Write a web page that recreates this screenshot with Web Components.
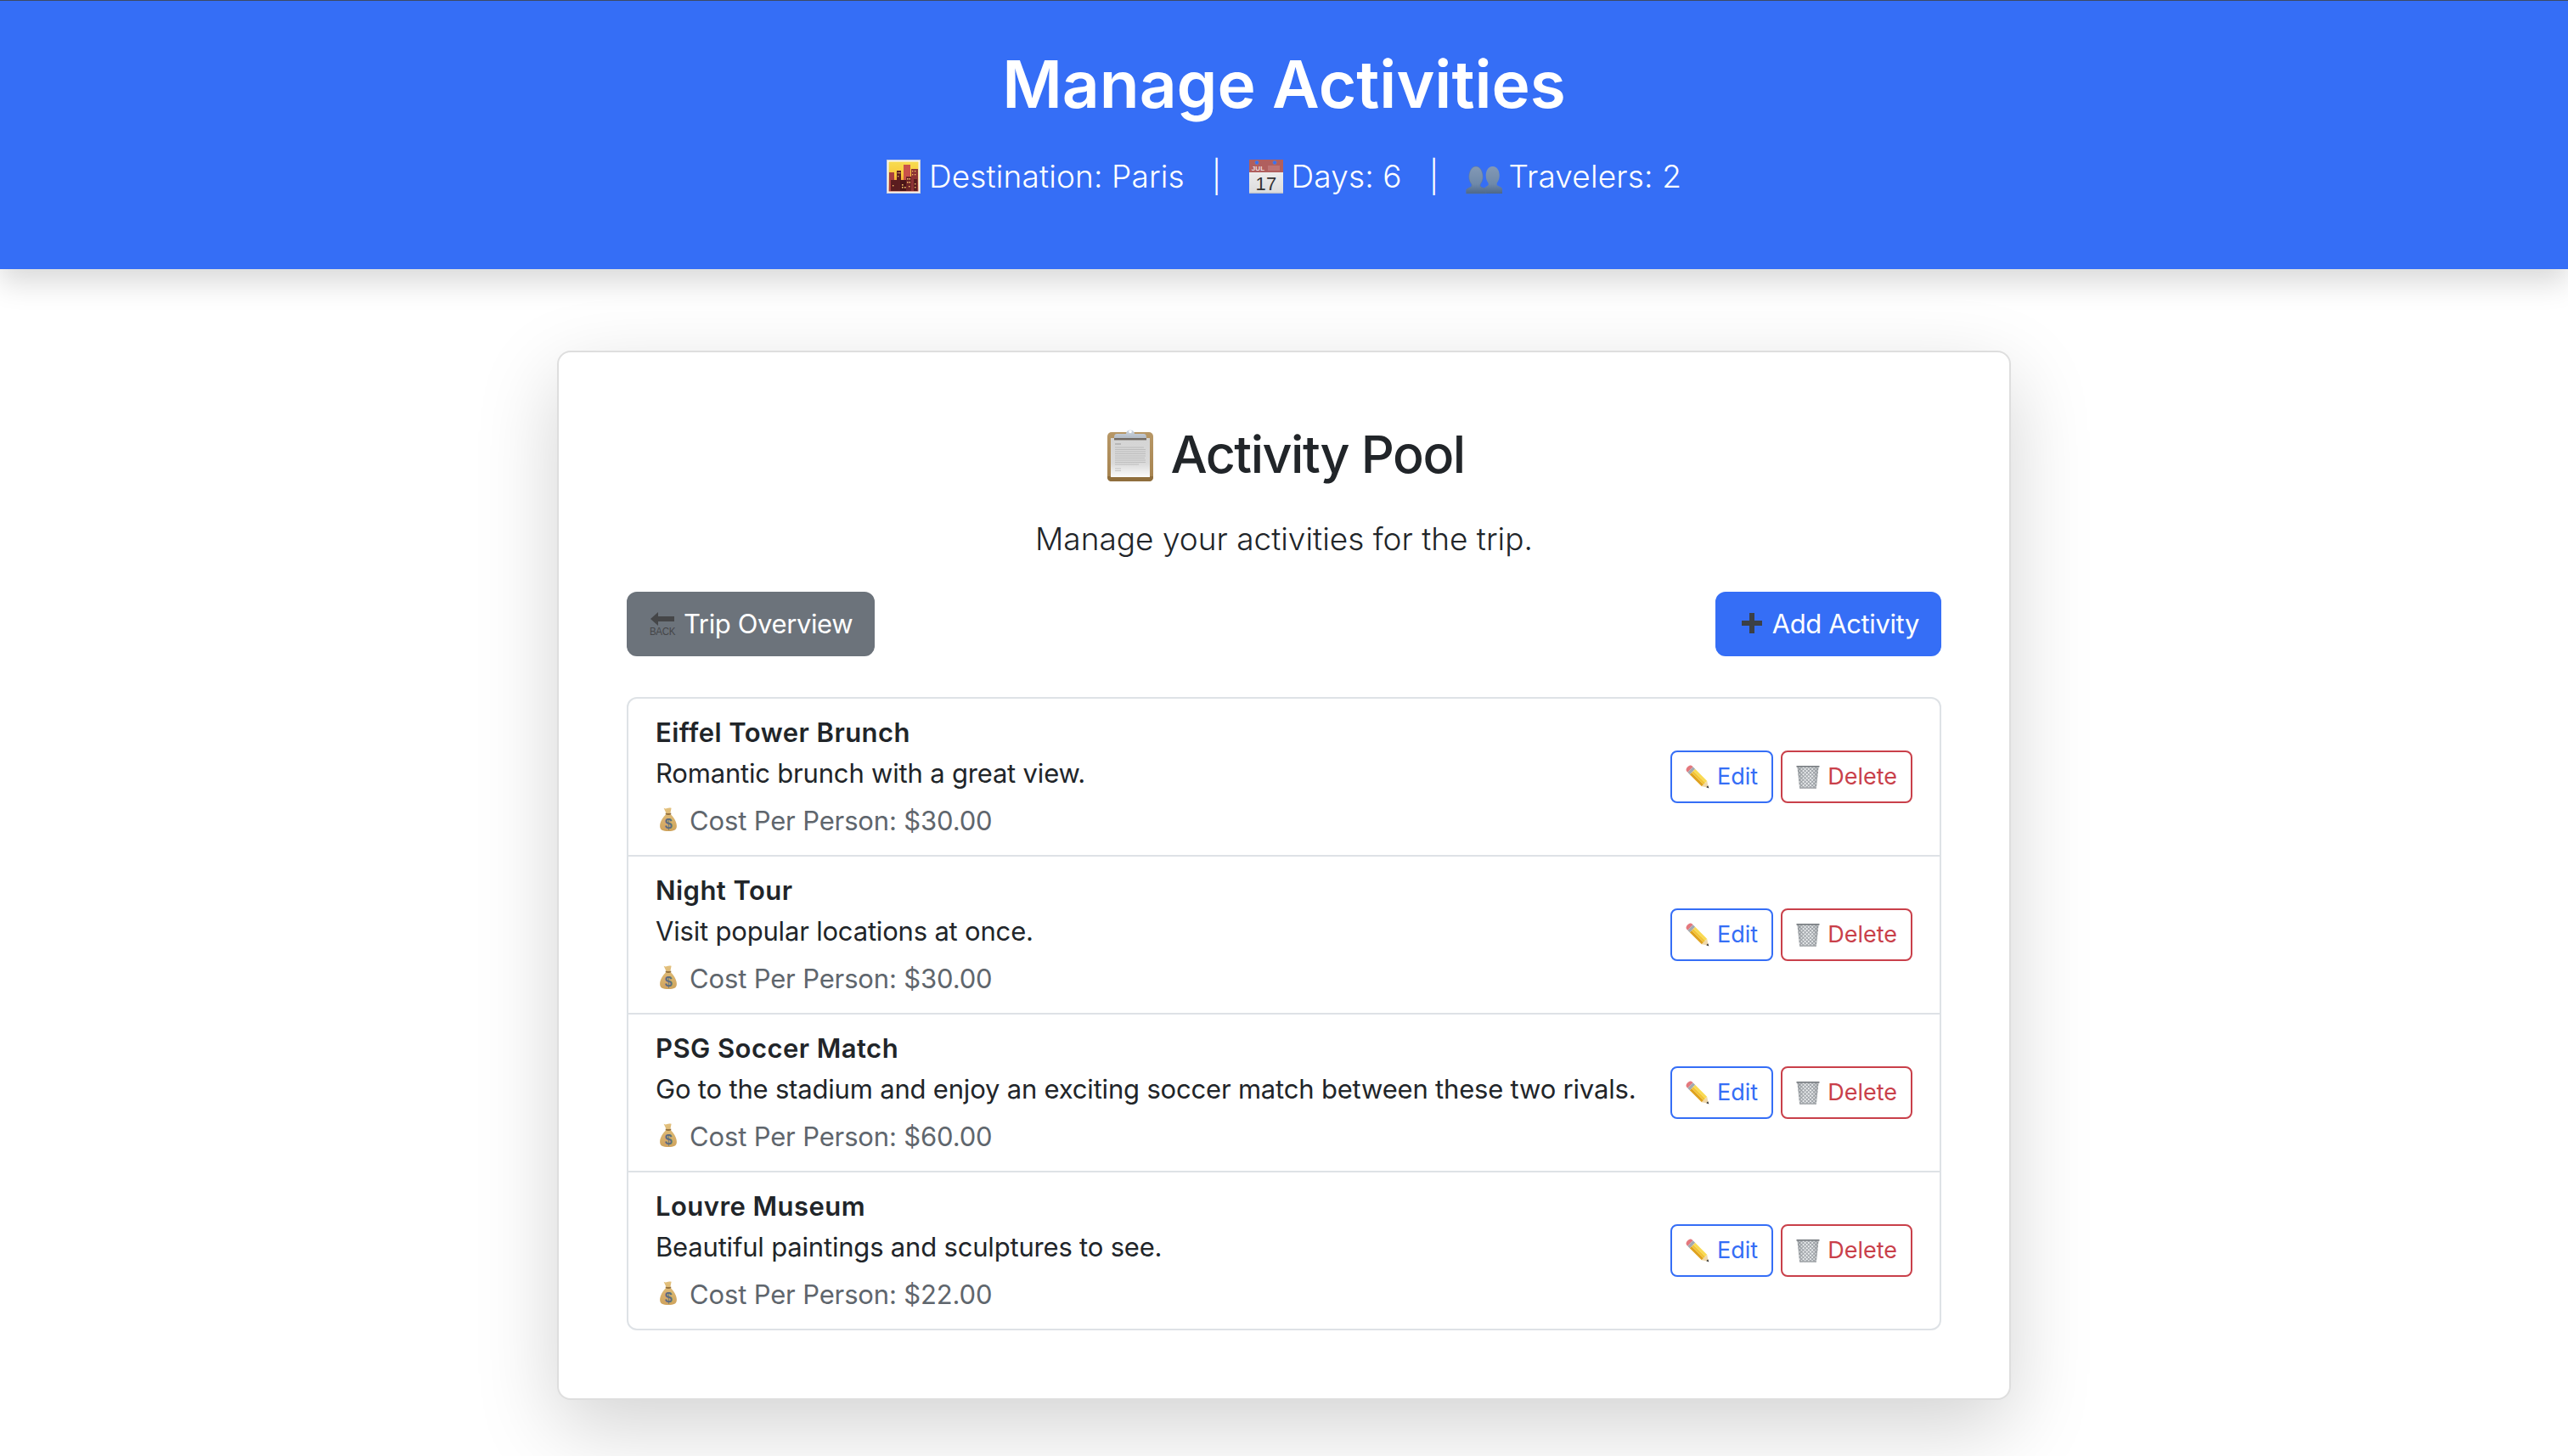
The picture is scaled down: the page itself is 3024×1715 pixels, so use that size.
<!DOCTYPE html>
<html lang="en">
<head>
<meta charset="utf-8">
<title>Manage Activities</title>
<style>
  html, body { margin: 0; padding: 0; background: #fff; }
  body { font-family: "Inter", "Liberation Sans", sans-serif; color: #212529; font-size: 31px; line-height: 1.5; height: 1715px; overflow: hidden; }
</style>
</head>
<body>
<trip-header>
  <span slot="title">Manage Activities</span>
  <trip-fact icon="city">Destination: Paris</trip-fact>
  <trip-fact icon="calendar">Days: 6</trip-fact>
  <trip-fact icon="people">Travelers: 2</trip-fact>
</trip-header>

<pool-card>
  <span slot="title">Activity Pool</span>
  <span slot="lead">Manage your activities for the trip.</span>
  <action-button slot="left" variant="secondary" icon="back">Trip Overview</action-button>
  <action-button slot="right" variant="primary" icon="plus">Add Activity</action-button>
  <activity-list>
    <activity-item>
      <span slot="name">Eiffel Tower Brunch</span>
      <span slot="desc">Romantic brunch with a great view.</span>
      <span slot="cost">Cost Per Person: $30.00</span>
    </activity-item>
    <activity-item>
      <span slot="name">Night Tour</span>
      <span slot="desc">Visit popular locations at once.</span>
      <span slot="cost">Cost Per Person: $30.00</span>
    </activity-item>
    <activity-item>
      <span slot="name">PSG Soccer Match</span>
      <span slot="desc">Go to the stadium and enjoy an exciting soccer match between these two rivals.</span>
      <span slot="cost">Cost Per Person: $60.00</span>
    </activity-item>
    <activity-item>
      <span slot="name">Louvre Museum</span>
      <span slot="desc">Beautiful paintings and sculptures to see.</span>
      <span slot="cost">Cost Per Person: $22.00</span>
    </activity-item>
  </activity-list>
</pool-card>

<script>
const ICONS = {
  city: `<svg viewBox="0 0 40 40"><defs><linearGradient id="s" x1="0" y1="0" x2="0" y2="1"><stop offset="0" stop-color="#f7dc52"/><stop offset=".45" stop-color="#f9c93a"/><stop offset=".8" stop-color="#ec8a3a"/><stop offset="1" stop-color="#c9502f"/></linearGradient></defs>
    <rect x=".5" y=".5" width="39" height="39" fill="#f6f6f4" stroke="#c9ccd6"/>
    <rect x="2.500" y="2.500" width="35" height="35" fill="url(#s)"/>
    <rect x="3" y="15" width="6" height="22" fill="#a8403f"/><rect x="12" y="13" width="5" height="24" fill="#5b1d20"/>
    <rect x="20" y="6" width="8" height="31" fill="#c9524a"/><rect x="29" y="11" width="8" height="26" fill="#8d3334"/>
    <rect x="5" y="24" width="8" height="13" fill="#5a1c1f"/><rect x="16" y="24" width="8" height="13" fill="#4a1518"/><rect x="23" y="20" width="6" height="17" fill="#6c2326"/><rect x="32" y="23" width="4" height="14" fill="#5a1c1f"/>
    <g fill="#f6c16a"><rect x="13" y="15" width="1.300" height="1.300"/><rect x="15" y="15" width="1.300" height="1.300"/><rect x="13" y="19" width="1.300" height="1.300"/><rect x="30" y="13" width="1.300" height="1.300"/><rect x="33" y="13" width="1.300" height="1.300"/><rect x="30" y="17" width="1.300" height="1.300"/><rect x="33" y="17" width="1.300" height="1.300"/><rect x="24" y="22" width="1.500" height="1.500"/><rect x="26.500" y="22" width="1.500" height="1.500"/><rect x="24" y="26" width="1.500" height="1.500"/><rect x="26.500" y="26" width="1.500" height="1.500"/><rect x="18" y="32" width="1.600" height="1.600"/><rect x="21" y="32" width="1.600" height="1.600"/><rect x="18" y="29" width="1.600" height="1.600"/><rect x="7" y="30" width="1.400" height="1.400"/><rect x="33" y="28" width="1.400" height="1.400"/><rect x="33" y="32" width="1.400" height="1.400"/><rect x="26" y="31" width="1.400" height="1.400"/></g></svg>`,
  calendar: `<svg viewBox="0 0 40 40"><defs><linearGradient id="c" x1="0" y1="0" x2="0" y2="1"><stop offset="0" stop-color="#ececec"/><stop offset="1" stop-color="#dcdcdc"/></linearGradient></defs>
    <rect y="0" width="40" height="15" fill="#b05f5e"/><rect y="15" width="40" height="25" fill="url(#c)"/><rect y="38.800" width="40" height="1.200" fill="#b6bccb"/>
    <circle cx="9" cy="3.500" r="2.200" fill="#356ef6" stroke="#7d86a8" stroke-width=".5"/><circle cx="30" cy="3.500" r="2.200" fill="#356ef6" stroke="#7d86a8" stroke-width=".5"/>
    <text x="10.500" y="13" text-anchor="middle" font-family="Liberation Sans, sans-serif" font-size="8" font-weight="700" fill="#ecdcdc">JUL</text>
    <g stroke="#c98a8a" stroke-width="1"><path d="M23 7v6M25 7v6M27 7v6M29 7v6M31 7v6M33 7v6M35 7v6"/></g>
    <text x="20" y="35.500" text-anchor="middle" font-family="Liberation Sans, sans-serif" font-size="22" fill="#333">17</text></svg>`,
  people: `<svg viewBox="0 0 40 40"><defs><linearGradient id="p" x1="0" y1="0" x2="0" y2="1"><stop offset="0" stop-color="#8399b5"/><stop offset=".65" stop-color="#6f89a9"/><stop offset="1" stop-color="#4d6789"/></linearGradient></defs>
    <path fill="url(#p)" d="M20 40V35c2-2 4-3.500 6-4.500 1-.6 1-2.200.2-3.600-1.600-2-2.500-5-2.500-8.200 0-5 2.500-10.700 8-10.700s8 5.700 8 10.700c0 3.200-1 6.200-2.600 8.200-.8 1.400-.7 3 .3 3.600 2.500 1.300 5.100 2 5.600 4V40z"/>
    <path fill="url(#p)" stroke="#5a7598" stroke-width=".5" d="M.5 40v-4c.5-2 3.100-2.700 5.600-4 1-.6 1.100-2.200.3-3.600-1.600-2-2.600-5-2.600-8.200 0-5 2.500-12.200 8.200-12.200s8.200 7.200 8.200 12.200c0 3.200-1 6.200-2.600 8.200-.8 1.400-.7 3 .3 3.600 2.500 1.300 5.500 2 6 4.500V40z"/></svg>`,
  clipboard: `<svg viewBox="0 0 64 64"><defs><linearGradient id="b" x1="0" y1="0" x2="0" y2="1"><stop offset="0" stop-color="#b79766"/><stop offset="1" stop-color="#a5824e"/></linearGradient><linearGradient id="pa" x1="0" y1="0" x2="0" y2="1"><stop offset="0" stop-color="#d4d4d4"/><stop offset=".65" stop-color="#dadada"/><stop offset="1" stop-color="#fbfbfb"/></linearGradient><linearGradient id="cl" x1="0" y1="0" x2="0" y2="1"><stop offset="0" stop-color="#ccd6e2"/><stop offset="1" stop-color="#b4bbc4"/></linearGradient></defs>
    <rect x="5" y="5" width="54" height="58" rx="5" fill="url(#b)"/>
    <path d="M5 57h54v1c0 3-2 5-5 5H10c-3 0-5-2-5-5z" fill="#8f6e3d"/>
    <rect x="9" y="12" width="46" height="46" fill="url(#pa)"/>
    <g stroke="#a8a8a8" stroke-width=".8" opacity=".7"><path d="M14 23h34M14 25.500h36M14 28h36M14 30.500h36M14 33h36M14 35.500h35M14 38h36M14 40.500h36M14 43h28M14 48h7M14 50.500h7"/></g>
    <path d="M14 19h7" stroke="#999" stroke-width="1"/>
    <path d="M13 12c0-4 1-5 4-5h10c.4-6 9.600-6 10 0h10c3 0 4 1 4 5z" fill="url(#cl)"/><circle cx="32" cy="4.500" r="1.800" fill="#fff"/>
    <rect x="13" y="12" width="38" height="2.400" fill="#716a63"/></svg>`,
  back: `<svg viewBox="0 0 32 32"><path fill="#454648" d="M2 10 11 2v5h19v6H11v5z"/><text x="16" y="29" text-anchor="middle" textLength="30" lengthAdjust="spacingAndGlyphs" font-family="Liberation Sans, sans-serif" font-size="12.500" fill="#454648">BACK</text></svg>`,
  plus: `<svg viewBox="0 0 32 32"><path fill="#3c4046" d="M14 3h6v9h9v6h-9v9h-6v-9H5v-6h9z"/></svg>`,
  pencil: `<svg viewBox="0 0 28 28"><g transform="translate(3 3) rotate(45)">
    <rect x="7" y="-4.500" width="20" height="3" fill="#f9da52"/><rect x="7" y="-1.500" width="20" height="3" fill="#f3c433"/><rect x="7" y="1.500" width="20" height="3" fill="#dfa21e"/>
    <path d="M27-4.500 33.500 0 27 4.500z" fill="#efd8aa"/><path d="M31.500-1.400 34.500 0 31.500 1.400z" fill="#333"/>
    <path d="M3.500-4.500H2C.5-4.500-1-3-1 0s1.500 4.500 3 4.500h1.500z" fill="#e4787d"/><rect x="3.500" y="-4.500" width="3.500" height="9" fill="#a3a9b0"/></g></svg>`,
  trash: `<svg viewBox="0 0 28 28"><defs><pattern id="m" width="3" height="3" patternUnits="userSpaceOnUse" patternTransform="rotate(45)"><rect width="3" height="3" fill="#eef0f1"/><path d="M0 0h3v1H0zM0 0h1v3H0z" fill="#9ea3a8"/></pattern><linearGradient id="t" x1="0" y1="0" x2="1" y2="0"><stop offset="0" stop-color="#6f7479" stop-opacity=".45"/><stop offset=".3" stop-color="#6f7479" stop-opacity="0"/><stop offset=".7" stop-color="#6f7479" stop-opacity="0"/><stop offset="1" stop-color="#6f7479" stop-opacity=".45"/></linearGradient></defs>
    <path d="M1.500 2.500h25L24 26.500c0 .8-.8 1.300-2 1.300H6c-1.200 0-2-.5-2-1.300z" fill="url(#m)"/>
    <path d="M1.500 2.500h25L24 26.500c0 .8-.8 1.300-2 1.300H6c-1.200 0-2-.5-2-1.300z" fill="url(#t)"/>
    <path d="M.5 1h27v1.600H.5z" fill="#6f7479"/><path d="M4 26.300h20v1.400H4z" fill="#a3a6aa"/></svg>`,
  bag: `<svg viewBox="0 0 28 28"><defs><linearGradient id="g" x1="0" y1="0" x2="0" y2="1"><stop offset="0" stop-color="#e3c17e"/><stop offset="1" stop-color="#cfa35c"/></linearGradient></defs>
    <g transform="translate(2.400 0) scale(.9 1)"><path d="M8 .8c2 .9 3 .8 4.500.3 1.500-.6 3-.9 5.500-.3L16.500 7.500c4 3.500 8.500 9 8.500 14.500 0 4.500-3.500 6-11 6s-11-1.500-11-6C3 16.500 7.500 11 11.500 7.500z" fill="url(#g)"/>
    <path d="M10.500 6.500c2 .8 5 .8 7 0l.2 1.800c-2.200.8-5.200.8-7.400 0z" fill="#94713e"/></g>
    <text x="15" y="24.500" text-anchor="middle" font-family="Liberation Sans, sans-serif" font-size="16" font-weight="700" fill="#5b6c80">$</text></svg>`
};

class TripEmoji extends HTMLElement {
  static get observedAttributes() { return ['name']; }
  constructor() { super(); this.attachShadow({ mode: 'open' }); this.render(); }
  attributeChangedCallback() { this.render(); }
  render() {
    this.shadowRoot.innerHTML = `<style>:host{display:inline-block;flex:none;width:var(--size,1em);height:var(--size,1em);line-height:0}svg{display:block;width:100%;height:100%;overflow:visible}</style>${ICONS[this.getAttribute('name')] || ''}`;
  }
}
customElements.define('trip-emoji', TripEmoji);

const headerTpl = document.createElement('template');
headerTpl.innerHTML = `<style>
  :host{display:block;background:#356ef6;color:#fff;border-top:1px solid #3d4a63;box-shadow:0 16px 32px rgba(0,0,0,.15);text-align:center;padding:50px 0 80px;position:relative}
  h1{margin:0 0 32px;font-size:76.6px;line-height:96px;font-weight:600}
  .facts{display:flex;justify-content:center;align-items:center;height:58px}
</style><h1><slot name="title"></slot></h1><div class="facts"><slot></slot></div>`;
class TripHeader extends HTMLElement {
  constructor(){ super(); this.attachShadow({mode:'open'}).append(headerTpl.content.cloneNode(true)); }
}
customElements.define('trip-header', TripHeader);

const factTpl = document.createElement('template');
factTpl.innerHTML = `<style>
  :host{display:inline-flex;align-items:center;font-size:37px;letter-spacing:.15px;line-height:58px;font-weight:300;--size:40px;white-space:pre}
  :host(:not(:first-of-type))::before{content:"|";margin:0 32px}
  .t{margin-left:10px}
</style><trip-emoji></trip-emoji><span class="t"><slot></slot></span>`;
class TripFact extends HTMLElement {
  constructor(){ super(); this.attachShadow({mode:'open'}).append(factTpl.content.cloneNode(true)); }
  connectedCallback(){ this.shadowRoot.querySelector('trip-emoji').setAttribute('name', this.getAttribute('icon')); }
}
customElements.define('trip-fact', TripFact);

const cardTpl = document.createElement('template');
cardTpl.innerHTML = `<style>
  :host{display:block;box-sizing:border-box;width:1712px;margin:96px auto 0;background:#fff;border:2px solid rgba(0,0,0,.13);border-radius:16px;box-shadow:0 32px 96px rgba(0,0,0,.175);padding:80px}
  h2{margin:2px 0 32px;display:flex;justify-content:center;align-items:center;gap:15px;font-size:61px;letter-spacing:-1.5px;line-height:77px;font-weight:500;--size:64px}
  p{margin:0 0 33px;text-align:center;font-size:37px;line-height:58px;font-weight:300}
  .bar{display:flex;justify-content:space-between;margin-bottom:48px}
</style>
<h2><trip-emoji name="clipboard"></trip-emoji><slot name="title"></slot></h2>
<p><slot name="lead"></slot></p>
<div class="bar"><slot name="left"></slot><slot name="right"></slot></div>
<slot></slot>`;
class PoolCard extends HTMLElement {
  constructor(){ super(); this.attachShadow({mode:'open'}).append(cardTpl.content.cloneNode(true)); }
}
customElements.define('pool-card', PoolCard);

const btnTpl = document.createElement('template');
btnTpl.innerHTML = `<style>
  :host{display:inline-flex;align-items:center;box-sizing:border-box;border:2px solid transparent;border-radius:12px;font-size:31px;letter-spacing:-.38px;line-height:48px;padding:12px 24px;gap:9px;--size:32px;white-space:nowrap;font-weight:400}
  :host([variant=primary]){background:#356ef6;border-color:#356ef6;color:#fff}
  :host([variant=secondary]){background:#6c737b;border-color:#6c737b;color:#fff}
  :host([size=sm]){font-size:27px;letter-spacing:0;line-height:42px;padding:8px 16px;border-radius:8px;--size:28px}
  :host([variant=outline-primary]){background:#fff;border-color:#356ef6;color:#356ef6}
  :host([variant=outline-danger]){background:#fff;border-color:#c9404a;color:#c9404a}
</style><trip-emoji></trip-emoji><span><slot></slot></span>`;
class ActionButton extends HTMLElement {
  constructor(){ super(); this.attachShadow({mode:'open'}).append(btnTpl.content.cloneNode(true)); }
  connectedCallback(){ this.shadowRoot.querySelector('trip-emoji').setAttribute('name', this.getAttribute('icon')); }
}
customElements.define('action-button', ActionButton);

const listTpl = document.createElement('template');
listTpl.innerHTML = `<style>
  :host{display:block;border:2px solid #dee2e6;border-radius:12px;overflow:hidden}
  ::slotted(activity-item:not(:last-child)){border-bottom:2px solid #dee2e6}
</style><slot></slot>`;
class ActivityList extends HTMLElement {
  constructor(){ super(); this.attachShadow({mode:'open'}).append(listTpl.content.cloneNode(true)); }
}
customElements.define('activity-list', ActivityList);

const itemTpl = document.createElement('template');
itemTpl.innerHTML = `<style>
  :host{display:flex;justify-content:space-between;align-items:center;box-sizing:border-box;height:186px;padding:16px 32px}
  :host(:last-child){height:184px}
  .name{font-weight:600;line-height:48px;font-size:31px;letter-spacing:.45px}
  .desc{line-height:48px;font-size:31px;letter-spacing:-.19px}
  .cost{display:flex;align-items:center;margin-top:8px;line-height:48px;color:#5f666d;font-size:31px;letter-spacing:-.15px;--size:28px;gap:12px}
  .cost trip-emoji{margin-bottom:4px}
  .actions{display:flex;gap:9px;flex:none}
</style>
<div><div class="name"><slot name="name"></slot></div><div class="desc"><slot name="desc"></slot></div>
<div class="cost"><trip-emoji name="bag"></trip-emoji><span><slot name="cost"></slot></span></div></div>
<div class="actions"><action-button size="sm" variant="outline-primary" icon="pencil">Edit</action-button><action-button size="sm" variant="outline-danger" icon="trash">Delete</action-button></div>`;
class ActivityItem extends HTMLElement {
  constructor(){ super(); this.attachShadow({mode:'open'}).append(itemTpl.content.cloneNode(true)); }
}
customElements.define('activity-item', ActivityItem);
</script>
</body>
</html>
